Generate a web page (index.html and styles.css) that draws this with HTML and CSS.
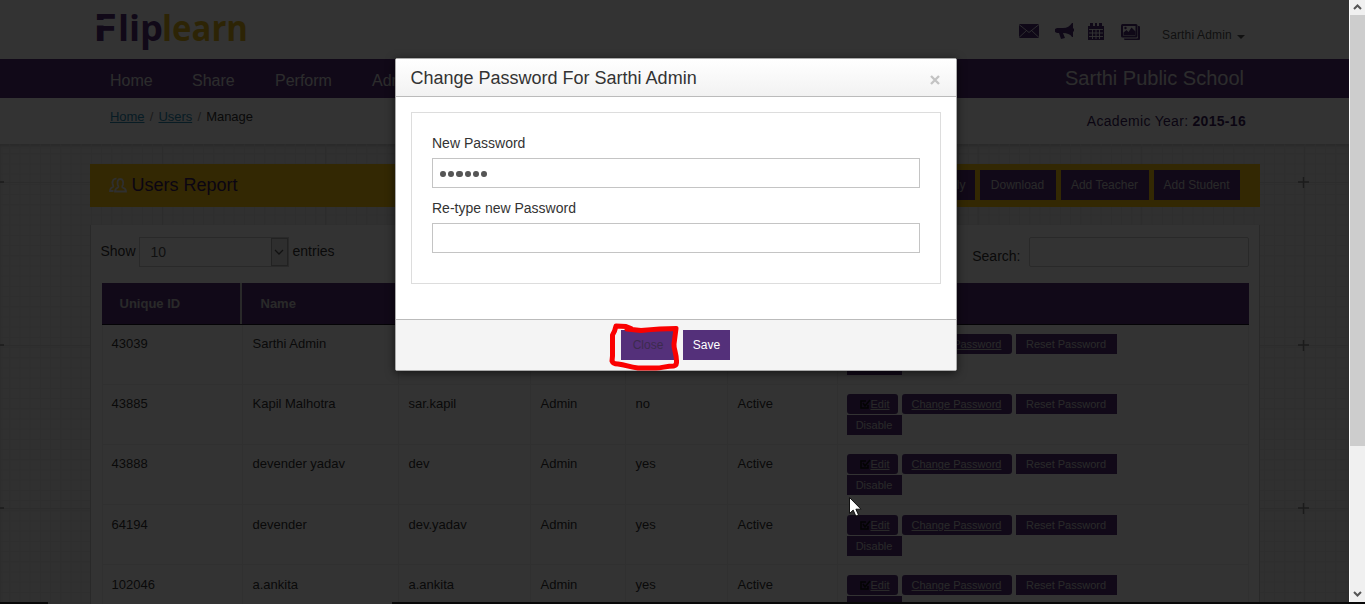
FILE: index.html
```
<!DOCTYPE html>
<html lang="en">
<head>
<meta charset="utf-8">
<title>Users Report</title>
<link rel="stylesheet" href="styles.css">
</head>
<body>
<div class="page">
  <header class="top">
    <svg class="logo" width="160" height="52" viewBox="0 0 160 52">
      <g class="logo-text">
        <text x="0" y="35" font-size="37" textLength="24" lengthAdjust="spacingAndGlyphs" class="violet">F</text>
        <text x="25" y="35" font-size="35" textLength="45" lengthAdjust="spacingAndGlyphs" class="violet">lip</text>
        <text x="69" y="35" font-size="35" textLength="86" lengthAdjust="spacingAndGlyphs" class="gold">learn</text>
      </g>
      <rect x="1" y="14" width="22" height="5.500" fill="#fff"/>
    </svg>
    <div class="tools">
      <svg width="20" height="14" viewBox="0 0 20 14"><path class="ink" d="M0 0h20v14H0z"/><path d="M0 .5l10 8 10-8M0 13.500l7.500-7M20 13.500l-7.500-7" fill="none" stroke="#fff" stroke-width=".8"/></svg>
      <svg width="19" height="17" viewBox="0 0 19 17"><path class="ink" d="M0 6l2-1h6c4 0 7-2 9-5h1v5l1 1v2l-1 1v5h-1c-2-3-5-4-9-4l2 5-4 1-2-6H2L0 9z"/></svg>
      <svg width="16" height="17" viewBox="0 0 16 17"><path class="ink" d="M0 3h2V0h3v3h2V0h2v3h2V0h3v3h2v14H0z"/><path d="M1 6.500h14M1 10h14M1 13.500h14M4.500 6v10M8 6v10M11.500 6v10" fill="none" stroke="#fff" stroke-width=".9"/></svg>
      <svg width="19" height="16" viewBox="0 0 19 16"><rect class="ink" width="16.500" height="13.500" rx="1.500"/><path class="ink" d="M17 2h1q1 0 1 1v12q0 1-1 1H4q-1 0-1-1.500h13q1 0 1-1.500z"/><path fill="#fff" d="M2 2h12.500v9.500H2z"/><path class="ink" d="M2.500 11V8.500l3-2.500 2 2 3-4.500 4 4V11z"/><circle class="ink" cx="4.500" cy="4" r="1.200"/></svg>
      <span class="account">Sarthi Admin</span><i class="caret"></i>
    </div>
  </header>
  <nav class="nav">
    <span class="n1">Home</span><span class="n2">Share</span><span class="n3">Perform</span><span>Adm</span>
    <span class="school">Sarthi Public School</span>
  </nav>
  <div class="crumbs">
    <div class="trail"><a>Home</a><i>/</i><a>Users</a><i>/</i><span>Manage</span></div>
    <div class="year">Academic Year: <b>2015-16</b></div>
  </div>
  <div class="canvas">
    <svg class="grid" width="1349" height="460">
      <defs>
        <pattern id="fine" width="10.200" height="10.200" patternUnits="userSpaceOnUse"><path d="M10 0v10M0 10h10" stroke="#e2e2e2" fill="none"/></pattern>
        <pattern id="coarse" x="-1" y="38" width="163.100" height="163.100" patternUnits="userSpaceOnUse"><path d="M.5 0v163M0 .5h163" stroke="#d9d9d9" fill="none"/></pattern>
      </defs>
      <rect width="1349" height="460" fill="url(#fine)"/>
      <rect width="1349" height="460" fill="url(#coarse)"/>
      <path d="M0 38h4M0 201h4M0 364h4M1298 38h11M1303.500 33v11M1298 201h11M1303.500 196v11M1298 364h11M1303.500 359v11" stroke="#888" stroke-width="1.500"/>
    </svg>
    <section class="content">
      <div class="titlebar">
        <svg width="18" height="16" viewBox="0 0 18 16"><g fill="none" stroke="#e8e8e8" stroke-width="1.800"><path d="M6 14.500h11q0-3-3.500-4c-1-.5 0-1.500.5-3 .6-3-.3-5.500-2.700-5.500S8 4.500 8.700 7.500c.4 1.500 1.300 2.500.3 3-2.500 1-3 2-3 4zM4.500 14H1q0-3 3-4c1-.5 0-1.500-.4-3C3 3.500 4.500 1.500 7.500 1.700"/></g></svg>
        <h1>Users Report</h1>
        <div class="actions"><span class="btn b0">Apply</span><span class="btn b1">Download</span><span class="btn b2">Add Teacher</span><span class="btn b3">Add Student</span></div>
      </div>
      <div class="panel">
        <div class="filters">
          <span>Show</span>
          <div class="select"><span>10</span><i><svg width="10" height="6" viewBox="0 0 10 6"><path d="M1 1l4 4 4-4" fill="none" stroke="#555" stroke-width="1.300"/></svg></i></div>
          <span>entries</span>
          <span class="search-label">Search:</span><div class="search"></div>
        </div>
        <div class="row head"><b>Unique ID</b><b>Name</b><b></b><b></b><b></b><b></b><b></b></div>
        <div class="row"><span>43039</span><span>Sarthi Admin</span><span></span><span></span><span></span><span></span><div class="ops"><a class="op edit"><svg class="pen" width="11" height="10"><use href="#pen"/></svg><u>Edit</u></a><a class="op change"><u>Change Password</u></a><a class="op reset">Reset Password</a><a class="op off">Disable</a></div></div>
        <div class="row"><span>43885</span><span>Kapil Malhotra</span><span>sar.kapil</span><span>Admin</span><span>no</span><span>Active</span><div class="ops"><a class="op edit"><svg class="pen" width="11" height="10"><use href="#pen"/></svg><u>Edit</u></a><a class="op change"><u>Change Password</u></a><a class="op reset">Reset Password</a><a class="op off">Disable</a></div></div>
        <div class="row"><span>43888</span><span>devender yadav</span><span>dev</span><span>Admin</span><span>yes</span><span>Active</span><div class="ops"><a class="op edit"><svg class="pen" width="11" height="10"><use href="#pen"/></svg><u>Edit</u></a><a class="op change"><u>Change Password</u></a><a class="op reset">Reset Password</a><a class="op off">Disable</a></div></div>
        <div class="row"><span>64194</span><span>devender</span><span>dev.yadav</span><span>Admin</span><span>yes</span><span>Active</span><div class="ops"><a class="op edit"><svg class="pen" width="11" height="10"><use href="#pen"/></svg><u>Edit</u></a><a class="op change"><u>Change Password</u></a><a class="op reset">Reset Password</a><a class="op off">Disable</a></div></div>
        <div class="row"><span>102046</span><span>a.ankita</span><span>a.ankita</span><span>Admin</span><span>yes</span><span>Active</span><div class="ops"><a class="op edit"><svg class="pen" width="11" height="10"><use href="#pen"/></svg><u>Edit</u></a><a class="op change"><u>Change Password</u></a><a class="op reset">Reset Password</a><a class="op off blank"></a></div></div>
      </div>
    </section>
  </div>
</div>
<svg width="0" height="0" class="defs"><defs><g id="pen" fill="none" stroke="#111" stroke-width="1.600"><path d="M8 6v3H1V2h5M3 4l2 3 5-6"/></g></defs></svg>
<div class="backdrop"></div>
<div class="edge e1"></div><div class="edge e2"></div>
<div class="scrollbar">
  <svg width="15" height="15" viewBox="0 0 15 15"><path d="M4 9l3.500-3.500L11 9" fill="none" stroke="#555" stroke-width="2"/></svg>
  <div class="thumb"></div>
  <svg width="15" height="15" viewBox="0 0 15 15"><path d="M4 5l3.500 3.500L11 5" fill="none" stroke="#555" stroke-width="2"/></svg>
</div>
<div class="modal">
  <div class="modal-head"><h2>Change Password For Sarthi Admin</h2><svg width="10" height="10" viewBox="0 0 10 10"><path d="M1 1l8 8M9 1l-8 8" stroke="#c3c3c3" stroke-width="2.400"/></svg></div>
  <div class="modal-body">
    <div class="form">
      <label>New Password</label>
      <div class="input"><i></i><i></i><i></i><i></i><i></i><i></i></div>
      <label>Re-type new Password</label>
      <div class="input"></div>
    </div>
  </div>
  <div class="modal-foot"><span class="close">Close</span><span class="save">Save</span></div>
</div>
<svg class="marker" width="76" height="52" viewBox="0 0 76 52"><path d="M23 8.500L18 6.500l-10-.5q-1 5-3.500 9v21l-.5 5q1 3 6 3c9 1 10 3 20 4h18c6 0 10-2 18-2q3-1 2.500-5c0-8-3-12-2.500-17l2-15.500q-15 0-35 2L19 9" fill="none" stroke="#fa0000" stroke-width="5" stroke-linejoin="round" stroke-linecap="round"/></svg>
<svg class="pointer" width="13" height="20" viewBox="0 0 13 20"><path d="M.5.500v16l3.700-3.400 2.600 6 2.700-1.200-2.600-5.700H12z" fill="#fff" stroke="#111"/></svg>
</body>
</html>
```
FILE: styles.css
```
* { box-sizing: border-box; }
body { margin: 0; width: 1365px; height: 604px; overflow: hidden; position: relative; font-family: "Liberation Sans", Arial, sans-serif; font-size: 13px; color: #333; background: #fff; }
i { font-style: normal; }
.page { width: 1349px; height: 604px; overflow: hidden; background: #fff; }
.top { height: 59px; padding: 6px 104px 0 93px; display: flex; justify-content: space-between; }
.logo-text { font-family: "Open Sans", sans-serif; font-weight: 700; }
.violet { fill: #54307a; }
.gold { fill: #e0b51c; }
.ink { fill: #4a2c74; }
.tools { display: flex; align-items: flex-start; padding-top: 17px; }
.tools svg:nth-child(1) { margin: 1px 16px 0 0; }
.tools svg:nth-child(2) { margin-right: 14px; }
.tools svg:nth-child(3) { margin: 0 17px 0 0; }
.tools svg:nth-child(4) { margin: 1px 22px 0 0; }
.account { line-height: 15px; padding-top: 5px; font-size: 12px; letter-spacing: .15px; width: 75px; white-space: nowrap; color: #555; }
.caret { border: 4px solid transparent; border-top-color: #555; border-bottom: 0; margin-top: 12px; }
.nav { height: 39px; background: #54307a; color: #ddd; font-size: 16px; line-height: 43px; padding: 0 105px 0 110px; display: flex; white-space: nowrap; }
.n1 { width: 82px; } .n2 { width: 83px; } .n3 { width: 97px; }
.school { margin-left: auto; font-size: 20px; line-height: 38px; }
.crumbs { height: 46px; display: flex; justify-content: space-between; padding: 10px 103px 0 110px; }
.trail { line-height: 17px; display: flex; letter-spacing: -.05px; }
.trail a { color: #2a8cb5; text-decoration: underline; }
.trail i { width: 14px; text-align: center; color: #888; }
.year { font-size: 14px; line-height: 26px; letter-spacing: .3px; color: #3a1c5c; }
.canvas { position: relative; height: 460px; background: #eee; box-shadow: inset 0 2px 3px #ccc; }
.grid { position: absolute; left: 0; top: 0; }
.content { position: relative; margin: 0 auto; width: 1170px; padding-top: 20px; }
.titlebar { height: 43px; background: #fdc70f; display: flex; align-items: center; padding: 0 20px 2px 19px; }
h1 { margin: 1px 0 0 5px; font-size: 18px; font-weight: 400; color: #3a1c5c; line-height: 20px; }
.actions { margin-left: auto; display: flex; gap: 5px; }
.btn { height: 30px; line-height: 30px; background: #54307a; color: #ccc; text-align: center; font-size: 12px; }
.b0 { width: 48px; } .b1 { width: 76px; } .b2 { width: 88px; } .b3 { width: 86px; }
.panel { margin-top: 18px; background: #fff; height: 400px; border: 1px solid #ccc; border-top: 0; padding: 12px 10px 0 11px; }
.filters { height: 45.500px; display: flex; align-items: flex-start; font-size: 14px; line-height: 28px; margin-left: -1px; }
.select { margin: 0 4px 0 3px; width: 150px; height: 30px; border: 1px solid #ccc; display: flex; justify-content: space-between; padding-left: 11px; line-height: 29px; color: #555; }
.select i { width: 17px; border: 1px solid #aaa; background: #e4e4e4; display: grid; place-items: center; }
.search-label { margin-left: auto; padding-top: 5px; margin-right: 8px; }
.search { width: 220px; height: 30px; border: 1px solid #ccc; border-radius: 2px; }
.row { display: grid; grid-template-columns: 140px 156px 132px 95px 102px 110px 412px; width: 1147px; height: 60.200px; border-bottom: 1px solid #eee; }
.row > span { padding: 11.500px 0 0 9px; line-height: 15px; border-left: 1px solid #eee; }
.row > span + span { padding-left: 10px; }
.head { height: 42px; background: #54307a; color: #ccc; border-bottom: 1px solid #181020; }
.head b { padding: 12px 0 0 19px; line-height: 17px; }
.head b:first-child { border-right: 2px solid #ccc; padding-left: 18px; }
.ops { border: 1px solid #eee; border-width: 0 1px; padding: 9.500px 0 0 9px; display: flex; flex-wrap: wrap; align-content: flex-start; column-gap: 4px; row-gap: 1px; }
.op { height: 20px; line-height: 20px; background: #54307a; color: #ccc; font-size: 11px; text-align: center; white-space: nowrap; }
.edit { width: 51px; border-radius: 3px; text-align: left; padding-left: 13px; display: flex; align-items: center; }
.change { width: 110px; border-radius: 3px; }
.reset { width: 101px; margin-right: 100px; }
.off { width: 55px; }
.backdrop { position: absolute; left: 0; top: 0; width: 1349px; height: 604px; background: rgba(0,0,0,.8); }
.edge { position: absolute; top: 602px; height: 2px; background: #080808; }
.e1 { left: 0; width: 48px; } .e2 { left: 392px; width: 973px; }
.defs { position: absolute; }
.scrollbar { position: absolute; left: 1349px; top: 0; width: 16px; height: 602px; background: #f0f0f0; border-left: 1px solid #fff; display: flex; flex-direction: column; }
.scrollbar svg:last-child { margin-top: auto; }
.thumb { height: 431px; background: #cdcdcd; }
.modal { position: absolute; left: 395px; top: 58px; width: 562px; height: 313px; background: #fff; border: 1px solid #aaa; box-shadow: 0 2px 10px rgba(0,0,0,.6); border-radius: 2px; }
.modal-head { height: 38px; border-bottom: 1px solid #bbb; background: linear-gradient(#fff, #f2f2f2); display: flex; justify-content: space-between; align-items: center; padding: 0 16px 0 14.500px; }
.modal-head svg { margin-top: 5px; }
h2 { margin: 0; font-weight: 400; font-size: 18px; line-height: 38px; height: 37px; }
.modal-body { height: 223px; padding: 15px; border-bottom: 1px solid #bbb; }
.form { height: 172px; border: 1px solid #ddd; padding: 20px; }
label { display: block; font-size: 14px; line-height: 20px; height: 25px; }
.input { width: 488px; height: 30px; border: 1px solid #c4c4c4; margin-bottom: 10px; padding-left: 7px; display: flex; align-items: center; gap: 2px; }
.input i { width: 6.200px; height: 6.500px; background: #555; border-radius: 50%; margin-top: 2px; }
.modal-foot { height: 50px; background: #f4f4f4; display: flex; gap: 8px; padding: 10px 0 0 225px; font-size: 12px; line-height: 30px; text-align: center; }
.close { width: 54px; height: 30px; background: #54307a; color: #3c2b4e; }
.save { width: 47px; height: 30px; background: #54307a; color: #fff; }
.marker { position: absolute; left: 608px; top: 320px; }
.pointer { position: absolute; left: 849px; top: 497px; }
```
